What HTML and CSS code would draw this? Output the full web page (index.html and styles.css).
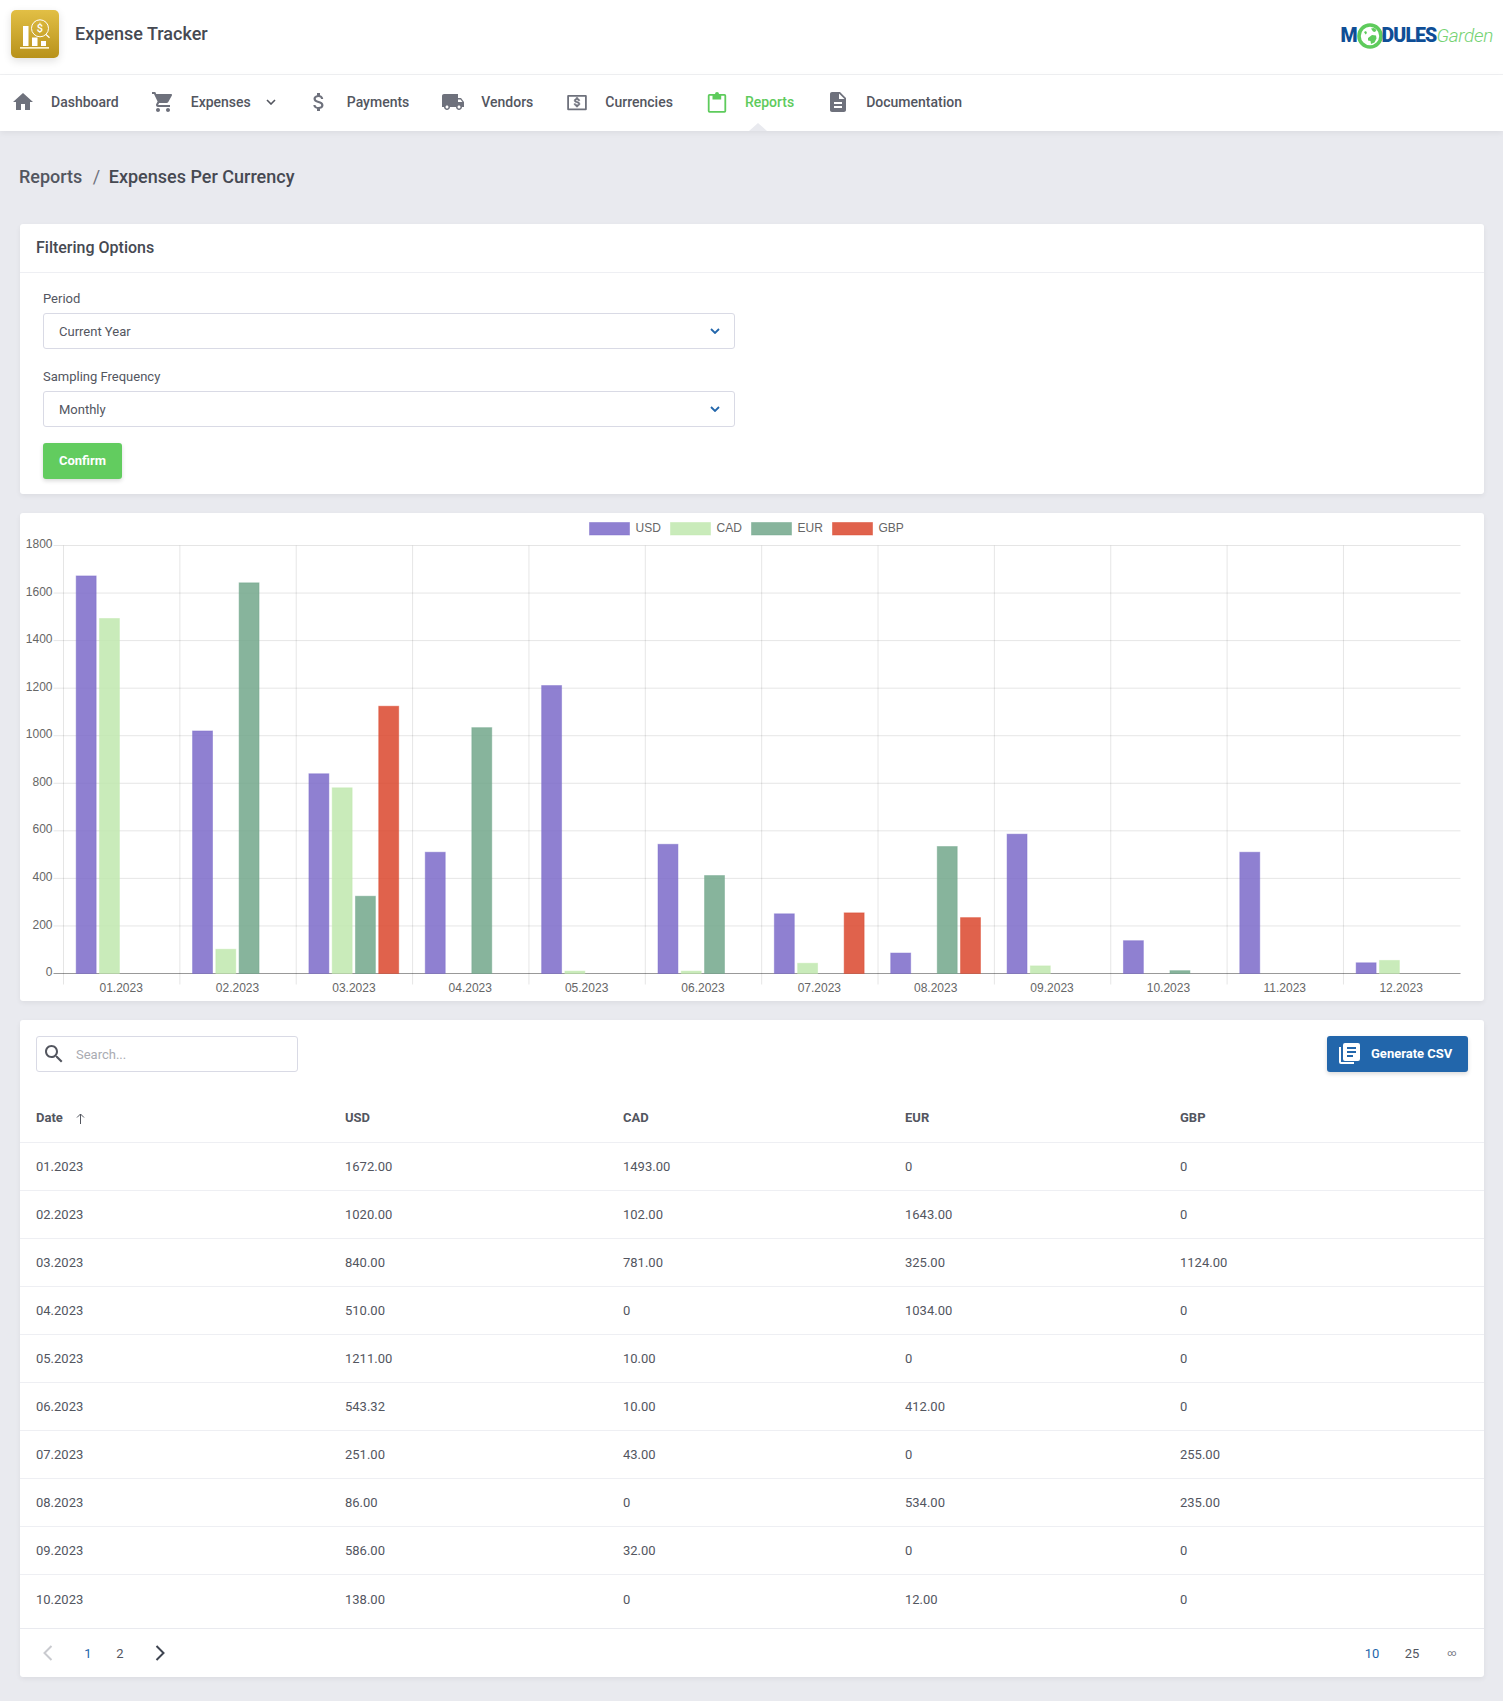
FILE: index.html
```html
<!DOCTYPE html>
<html lang="en">
  <head>
    <meta charset="UTF-8" />
    <meta name="viewport" content="width=device-width, initial-scale=1.0" />
    <title>Expense Tracker - Expenses Per Currency</title>
    <link rel="stylesheet" href="styles.css">
  </head>
  <body>
    <header class="top-header">
      <div class="app-logo">
        <svg viewBox="0 0 48 48" width="48" height="48">
          <defs>
            <linearGradient id="gold" x1="0" y1="0" x2="0" y2="1">
              <stop offset="0" stop-color="#e2bf45" />
              <stop offset="1" stop-color="#b8921b" />
            </linearGradient>
          </defs>
          <rect width="48" height="48" rx="5" fill="url(#gold)" />
          <rect x="12" y="16" width="5.5" height="20" fill="#fff" />
          <rect x="21" y="27.5" width="5.5" height="8.5" fill="#fff" />
          <rect x="30" y="31" width="5" height="5" fill="#fff" />
          <rect x="9" y="37" width="29" height="1.7" fill="#fdf3cf" />
          <circle cx="29" cy="18.3" r="8.5" fill="none" stroke="#fff" stroke-width="1" />
          <line x1="35" y1="24.5" x2="38.5" y2="27.8" stroke="#fff" stroke-width="1.2" />
          <text x="29" y="22.4" text-anchor="middle" class="logo-dollar">$</text>
        </svg>
      </div>
      <div class="app-title">Expense Tracker</div>
      <div class="spacer"></div>
      <div class="mg-logo">
        <span class="mg-bold">M</span>
        <svg class="mg-ring" viewBox="0 0 26 26" width="26" height="26">
          <circle cx="13" cy="13" r="11" fill="#fff" stroke="#5ecb5c" stroke-width="3.6" />
          <path d="M14 5.500l3-.5 2.500 2-1.500 2-2-.5zM7 9l2-1 1 2-1.500 1.500zM11 15l4-3 4 .5.500 3-2 4-3.500 1.500-.500-3-2.500-.500z" fill="#5ecb5c" />
        </svg>
        <span class="mg-bold mg-rest">DULES</span>
        <span class="mg-light">Garden</span>
      </div>
    </header>

    <nav class="main-nav">
      <a class="nav-item">
        <svg class="nav-icon" viewBox="0 0 24 24"><path d="M10 20v-6h4v6h5v-8h3L12 3 2 12h3v8z" /></svg>
        <span>Dashboard</span>
      </a>
      <a class="nav-item">
        <svg class="nav-icon" viewBox="0 0 24 24"><path d="M7 18c-1.100 0-1.990.9-1.990 2S5.900 22 7 22s2-.9 2-2-.9-2-2-2zM1 2v2h2l3.600 7.590-1.350 2.450c-.16.28-.25.61-.25.96 0 1.100.9 2 2 2h12v-2H7.420c-.14 0-.25-.11-.25-.25l.03-.12.9-1.630h7.450c.75 0 1.410-.41 1.750-1.030l3.580-6.490c.08-.14.12-.31.12-.48 0-.55-.45-1-1-1H5.210l-.94-2H1zm16 16c-1.100 0-1.990.9-1.990 2s.89 2 1.990 2 2-.9 2-2-.9-2-2-2z" /></svg>
        <span>Expenses</span>
        <svg class="nav-caret" viewBox="0 0 10 6"><path d="M1 1l4 4 4-4" /></svg>
      </a>
      <a class="nav-item">
        <svg class="nav-icon" viewBox="0 0 24 24"><path d="M11.800 10.900c-2.270-.59-3-1.200-3-2.150 0-1.090 1.010-1.850 2.700-1.850 1.780 0 2.440.85 2.500 2.100h2.210c-.07-1.720-1.120-3.300-3.210-3.810V3h-3v2.160c-1.940.42-3.500 1.680-3.500 3.610 0 2.310 1.910 3.460 4.700 4.130 2.500.6 3 1.480 3 2.410 0 .69-.49 1.790-2.700 1.790-2.060 0-2.870-.92-2.980-2.100h-2.200c.12 2.190 1.760 3.420 3.680 3.830V21h3v-2.150c1.950-.37 3.500-1.500 3.500-3.550 0-2.840-2.430-3.810-4.700-4.400z" /></svg>
        <span>Payments</span>
      </a>
      <a class="nav-item">
        <svg class="nav-icon" viewBox="0 0 24 24"><path d="M20 8h-3V4H3c-1.100 0-2 .9-2 2v11h2c0 1.660 1.340 3 3 3s3-1.340 3-3h6c0 1.660 1.340 3 3 3s3-1.340 3-3h2v-5l-3-4zM6 18.500c-.83 0-1.500-.67-1.500-1.500s.67-1.500 1.500-1.500 1.500.67 1.500 1.500-.67 1.500-1.500 1.500zm13.500-9l1.960 2.500H17V9.500h2.500zm-1.500 9c-.83 0-1.500-.67-1.500-1.500s.67-1.500 1.500-1.500 1.500.67 1.500 1.500-.67 1.500-1.500 1.500z" /></svg>
        <span>Vendors</span>
      </a>
      <a class="nav-item">
        <svg class="nav-icon" viewBox="0 0 24 24">
          <path fill-rule="evenodd" d="M3.300 5h17.400a1.100 1.100 0 0 1 1.100 1.100v13.100a1.100 1.100 0 0 1-1.100 1.100H3.300a1.100 1.100 0 0 1-1.100-1.100V6.100A1.100 1.100 0 0 1 3.300 5zm.7 1.800v11.700h16V6.800z" />
          <path stroke="#6e717c" stroke-width="0.5" d="M11.200 7.500h1.600v1.100c1.100.2 1.900.9 2 2.100h-1.500c-.1-.6-.5-1-1.300-1-.8 0-1.300.4-1.300.9 0 .5.500.8 1.500 1 1.600.4 2.700 1 2.700 2.300 0 1.100-.8 1.800-2.100 2v1.100h-1.600v-1.100c-1.200-.2-2.100-1-2.200-2.200h1.500c.1.700.6 1.100 1.500 1.100 1 0 1.400-.4 1.400-.9 0-.6-.5-.9-1.600-1.200-1.500-.3-2.600-.9-2.600-2.100 0-1 .8-1.800 2-2z" />
        </svg>
        <span>Currencies</span>
      </a>
      <a class="nav-item active">
        <svg class="nav-icon" viewBox="0 0 24 24">
          <path fill-rule="evenodd" d="M4.500 4h15a1.700 1.700 0 0 1 1.700 1.700v15.300a1.700 1.700 0 0 1-1.700 1.700h-15a1.700 1.700 0 0 1-1.700-1.700V5.700A1.700 1.700 0 0 1 4.500 4zm.1 1.800v15.100h14.800V5.800z" />
          <path d="M7.500 4H10a2 2 0 0 1 4 0h2.200v5.500H7.500z" />
        </svg>
        <span>Reports</span>
      </a>
      <a class="nav-item">
        <svg class="nav-icon" viewBox="0 0 24 24"><path d="M14 2H6c-1.100 0-1.990.9-1.990 2L4 20c0 1.100.89 2 1.990 2H18c1.100 0 2-.9 2-2V8l-6-6zm2 16H8v-2h8v2zm0-4H8v-2h8v2zm-3-5V3.500L18.500 9H13z" /></svg>
        <span>Documentation</span>
      </a>
      <div class="active-notch"></div>
    </nav>

    <main class="content">
      <h1 class="breadcrumb">
        <span>Reports</span>
        <span class="crumb-sep">/</span>
        <span class="crumb-current">Expenses Per Currency</span>
      </h1>

      <section class="card">
        <div class="card-title">Filtering Options</div>
        <div class="filter-form">
          <div class="field">
            <label>Period</label>
            <div class="select-box">
              <span>Current Year</span>
              <svg viewBox="0 0 10 6" class="select-caret"><path d="M1 1l4 4 4-4" /></svg>
            </div>
          </div>
          <div class="field">
            <label>Sampling Frequency</label>
            <div class="select-box">
              <span>Monthly</span>
              <svg viewBox="0 0 10 6" class="select-caret"><path d="M1 1l4 4 4-4" /></svg>
            </div>
          </div>
          <button class="btn-confirm">Confirm</button>
        </div>
      </section>

      <section class="card chart-card">
        <svg id="chart" width="1464" height="488" viewBox="0 0 1464 488"></svg>
      </section>

      <section class="card">
        <div class="toolbar">
          <div class="search-box">
            <svg viewBox="0 0 24 24" class="search-icon"><path d="M15.500 14h-.79l-.28-.27C15.410 12.590 16 11.110 16 9.500 16 5.910 13.090 3 9.500 3S3 5.910 3 9.500 5.910 16 9.500 16c1.610 0 3.090-.59 4.230-1.570l.27.28v.79l5 4.990L20.490 19l-4.990-5zm-6 0C7.010 14 5 11.990 5 9.500S7.010 5 9.500 5 14 7.010 14 9.500 11.990 14 9.500 14z" /></svg>
            <span>Search...</span>
          </div>
          <button class="btn-csv">
            <svg viewBox="0 0 21 21" class="csv-icon">
              <path d="M0 4h2v15h13v2H2a2 2 0 0 1-2-2z" />
              <path d="M6 0h13a2 2 0 0 1 2 2v14a2 2 0 0 1-2 2H6a2 2 0 0 1-2-2V2a2 2 0 0 1 2-2zm2 4v2h9V4zm0 4v2h9V8zm0 4v2h6v-2z" fill-rule="evenodd" />
            </svg>
            <span>Generate CSV</span>
          </button>
        </div>
        <table class="data-table">
          <colgroup>
            <col class="col-date" />
            <col class="col-usd" />
            <col class="col-cad" />
            <col class="col-eur" />
            <col />
          </colgroup>
          <thead>
            <tr>
              <th>Date <svg viewBox="0 0 9 11" class="sort-arrow"><path d="M4.500 11V1M1 4.500L4.500 1 8 4.500" /></svg></th>
              <th>USD</th>
              <th>CAD</th>
              <th>EUR</th>
              <th>GBP</th>
            </tr>
          </thead>
          <tbody>
            <tr><td>01.2023</td><td>1672.00</td><td>1493.00</td><td>0</td><td>0</td></tr>
            <tr><td>02.2023</td><td>1020.00</td><td>102.00</td><td>1643.00</td><td>0</td></tr>
            <tr><td>03.2023</td><td>840.00</td><td>781.00</td><td>325.00</td><td>1124.00</td></tr>
            <tr><td>04.2023</td><td>510.00</td><td>0</td><td>1034.00</td><td>0</td></tr>
            <tr><td>05.2023</td><td>1211.00</td><td>10.00</td><td>0</td><td>0</td></tr>
            <tr><td>06.2023</td><td>543.32</td><td>10.00</td><td>412.00</td><td>0</td></tr>
            <tr><td>07.2023</td><td>251.00</td><td>43.00</td><td>0</td><td>255.00</td></tr>
            <tr><td>08.2023</td><td>86.00</td><td>0</td><td>534.00</td><td>235.00</td></tr>
            <tr><td>09.2023</td><td>586.00</td><td>32.00</td><td>0</td><td>0</td></tr>
            <tr class="last-row"><td>10.2023</td><td>138.00</td><td>0</td><td>12.00</td><td>0</td></tr>
          </tbody>
        </table>
        <div class="table-footer">
          <div class="pager">
            <svg viewBox="0 0 24 24" class="page-arrow disabled"><path d="M15.500 5l-7 7 7 7" /></svg>
            <div class="page-nums">
              <a class="selected">1</a>
              <a>2</a>
            </div>
            <svg viewBox="0 0 24 24" class="page-arrow"><path d="M8.500 5l7 7-7 7" /></svg>
          </div>
          <div class="page-sizes">
            <a class="selected">10</a>
            <a>25</a>
            <a class="size-all">∞</a>
          </div>
        </div>
      </section>
    </main>

    <script src="chart.js"></script>
  </body>
</html>
```

FILE: styles.css
```css
* {
  box-sizing: border-box;
}

body {
  margin: 0;
  background-color: #e9eaef;
  font-family: Roboto, "Liberation Sans", sans-serif;
  font-size: 13px;
  color: #53565f;
}

.top-header {
  height: 75px;
  padding: 10px 10px 16px 11px;
  display: flex;
  align-items: center;
  background-color: #fff;
  border-bottom: 1px solid #f0f1f3;
}

.app-logo {
  width: 48px;
  height: 48px;
  border-radius: 5px;
  box-shadow: 0 3px 8px rgba(0, 0, 0, 0.12);
}

.logo-dollar {
  font-family: Roboto, sans-serif;
  font-size: 11px;
  font-weight: 500;
  fill: #fff;
}

.app-title {
  margin-left: 16px;
  padding-bottom: 2px;
  font-size: 18px;
  font-weight: 500;
  color: #464952;
}

.spacer {
  flex: 1;
}

.mg-logo {
  display: flex;
  align-items: center;
  height: 26px;
  margin-top: 3px;
}

.mg-bold {
  font-family: Roboto, sans-serif;
  font-size: 19.5px;
  font-weight: 900;
  color: #0f4e96;
}

.mg-rest {
  letter-spacing: -0.9px;
}

.mg-ring {
  margin-left: -1px;
  margin-right: -1px;
}

.mg-light {
  font-family: Roboto, sans-serif;
  font-size: 19px;
  font-weight: 300;
  font-style: italic;
  color: #74d272;
  letter-spacing: -0.3px;
}

.main-nav {
  position: relative;
  height: 56px;
  padding: 0 0 2px 11px;
  display: flex;
  align-items: center;
  gap: 32px;
  background-color: #fff;
  box-shadow: 0 2px 6px rgba(0, 0, 0, 0.06);
}

.nav-item {
  display: flex;
  align-items: center;
  gap: 16px;
  font-size: 14px;
  font-weight: 500;
  color: #53565f;
}

.nav-icon {
  width: 24px;
  height: 24px;
  fill: #6e717c;
}

.nav-caret {
  width: 10px;
  height: 6px;
  margin-left: -1px;
  margin-right: -1px;
  fill: none;
  stroke: #53565f;
  stroke-width: 1.6;
}

.nav-item.active {
  color: #5ecb5c;
}

.nav-item.active .nav-icon {
  fill: #5ecb5c;
}

.active-notch {
  position: absolute;
  left: 749px;
  bottom: 0;
  width: 0;
  height: 0;
  border-left: 9px solid transparent;
  border-right: 9px solid transparent;
  border-bottom: 8px solid #e9eaef;
}

.content {
  padding: 33px 19px 24px 20px;
}

.breadcrumb {
  margin: 0 0 34px -1px;
  height: 26px;
  line-height: 26px;
  font-size: 18px;
  font-weight: 500;
  color: #53565f;
}

.crumb-sep {
  margin: 0 4px 0 6px;
  font-weight: 400;
  color: #6e717c;
}

.crumb-current {
  color: #464952;
}

.card {
  margin-bottom: 19px;
  background-color: #fff;
  border-radius: 3px;
  box-shadow: 0 2px 5px rgba(0, 0, 0, 0.06);
}

.card:last-child {
  margin-bottom: 0;
}

.card-title {
  height: 49px;
  padding: 0 16px 2px;
  display: flex;
  align-items: center;
  font-size: 16px;
  font-weight: 500;
  color: #464952;
  border-bottom: 1px solid #eeeff3;
}

.filter-form {
  padding: 14px 23px 15px;
}

.field {
  margin-bottom: 16px;
}

.field label {
  display: block;
  height: 24px;
  margin-bottom: 2px;
  line-height: 24px;
  color: #53565f;
}

.select-box {
  width: 692px;
  height: 36px;
  padding: 0 14px 0 15px;
  display: flex;
  align-items: center;
  justify-content: space-between;
  border: 1px solid #d9dae5;
  border-radius: 3px;
}

.select-caret {
  width: 10px;
  height: 6px;
  fill: none;
  stroke: #2266ab;
  stroke-width: 1.8;
}

.btn-confirm {
  display: block;
  width: 79px;
  height: 36px;
  padding: 0 0 2px;
  font-family: inherit;
  font-size: 13px;
  font-weight: 700;
  color: #fff;
  background-color: #62cc5f;
  border: none;
  border-radius: 3px;
  box-shadow: 0 2px 4px rgba(0, 0, 0, 0.15);
}

.chart-card {
  height: 488px;
}

#chart {
  display: block;
}

#chart text {
  font-family: "Liberation Sans", Arial, sans-serif;
  font-size: 12px;
  fill: #666;
}

.toolbar {
  padding: 16px 16px 0;
  margin-bottom: 23px;
  display: flex;
  justify-content: space-between;
  align-items: center;
}

.search-box {
  width: 262px;
  height: 36px;
  padding: 0 10px 0 5px;
  display: flex;
  align-items: center;
  gap: 10px;
  color: #a9abb2;
  border: 1px solid #d9dae5;
  border-radius: 3px;
}

.search-icon {
  width: 24px;
  height: 24px;
  fill: #53565f;
}

.btn-csv {
  width: 141px;
  height: 36px;
  padding: 0 0 1px 12px;
  display: flex;
  align-items: center;
  gap: 11px;
  font-family: inherit;
  font-size: 13px;
  font-weight: 700;
  color: #fff;
  background-color: #2266ab;
  border: none;
  border-radius: 3px;
  box-shadow: 0 2px 4px rgba(0, 0, 0, 0.15);
}

.csv-icon {
  width: 21px;
  height: 21px;
  fill: #fff;
}

.data-table {
  width: 100%;
  table-layout: fixed;
  border-collapse: separate;
  border-spacing: 0;
}

.col-date {
  width: 309px;
}

.col-usd {
  width: 278px;
}

.col-cad {
  width: 282px;
}

.col-eur {
  width: 275px;
}

.data-table th,
.data-table td {
  height: 48px;
  padding: 0 16px;
  text-align: left;
  border-bottom: 1px solid #eeeff3;
}

.data-table th {
  padding-bottom: 2px;
  font-weight: 700;
  color: #53565f;
}

.data-table .last-row td {
  border-bottom: none;
}

.sort-arrow {
  width: 9px;
  height: 11px;
  margin-left: 10px;
  vertical-align: -2px;
  fill: none;
  stroke: #53565f;
  stroke-width: 1;
}

.table-footer {
  height: 49px;
  margin-top: 5px;
  padding: 0 12px 0 16px;
  display: flex;
  justify-content: space-between;
  align-items: center;
  border-top: 1px solid #e9eaef;
}

.pager {
  display: flex;
  align-items: center;
}

.page-arrow {
  width: 24px;
  height: 24px;
  fill: none;
  stroke: #3e4450;
  stroke-width: 2;
}

.page-arrow.disabled {
  stroke: #c9cacf;
}

.page-nums {
  margin: 0 12px;
  display: flex;
}

.page-nums a {
  width: 32px;
  text-align: center;
}

.page-sizes {
  display: flex;
  align-items: center;
}

.page-sizes a {
  width: 40px;
  text-align: center;
}

.page-sizes .size-all {
  font-size: 9px;
  color: #6e717c;
}

.selected {
  color: #2266ab;
}
```

FILE: chart.js
```js
const labels = ["01.2023", "02.2023", "03.2023", "04.2023", "05.2023", "06.2023",
  "07.2023", "08.2023", "09.2023", "10.2023", "11.2023", "12.2023"];

const series = [
  { name: "USD", color: "#7b6ac9", data: [1672, 1020, 840, 510, 1211, 543.32, 251, 86, 586, 138, 510, 45] },
  { name: "CAD", color: "#c0e8ae", data: [1493, 102, 781, 0, 10, 10, 43, 0, 32, 0, 0, 55] },
  { name: "EUR", color: "#72a78b", data: [0, 1643, 325, 1034, 0, 412, 0, 534, 0, 12, 0, 0] },
  { name: "GBP", color: "#da472d", data: [0, 0, 1124, 0, 0, 0, 255, 235, 0, 0, 0, 0] }
];

const svg = document.getElementById("chart");
const left = 43.5;
const right = 1440.5;
const top_ = 32.5;
const zero = 460.5;
const step = 116.36;

function add(tag, attrs, text) {
  const el = document.createElementNS("http://www.w3.org/2000/svg", tag);
  for (const key in attrs) el.setAttribute(key, attrs[key]);
  if (text) el.textContent = text;
  svg.appendChild(el);
}

function bar(x, y, w, h, color) {
  add("rect", {
    x: x + 0.5, y: y + 0.5, width: w - 1, height: h - 0.5,
    fill: color, "fill-opacity": 0.85, stroke: color, "stroke-opacity": 0.45
  });
}

// legend
const legendX = [569, 650, 731, 812];
series.forEach((s, i) => {
  bar(legendX[i], 9, 41, 13, s.color);
  add("text", { x: legendX[i] + 46.5, y: 19 }, s.name);
});

// grid
for (let i = 0; i <= 9; i++) {
  const y = zero - (zero - top_) * i / 9;
  add("line", {
    x1: left - 10, x2: right, y1: y, y2: y,
    stroke: i === 0 ? "#999" : "rgba(0,0,0,0.1)"
  });
  add("text", { x: 32.5, y: y + 2.6, "text-anchor": "end" }, String(i * 200));
}

for (let i = 0; i < 12; i++) {
  const x = left + step * i;
  add("line", { x1: x, x2: x, y1: top_, y2: zero + 11, stroke: "rgba(0,0,0,0.1)" });
  add("text", { x: x + step / 2 - 0.5, y: 478.5, "text-anchor": "middle" }, labels[i]);
}

// bars
const slot = step * 0.8 / 4;
series.forEach((s, n) => {
  s.data.forEach((value, i) => {
    if (!value) return;
    const h = value * (zero - top_) / 1800;
    const x = left + step * i + step * 0.1 + slot * n + slot * 0.05 - 0.6;
    bar(x, zero - h - 0.5, slot * 0.9, h + 0.5, s.color);
  });
});
```
